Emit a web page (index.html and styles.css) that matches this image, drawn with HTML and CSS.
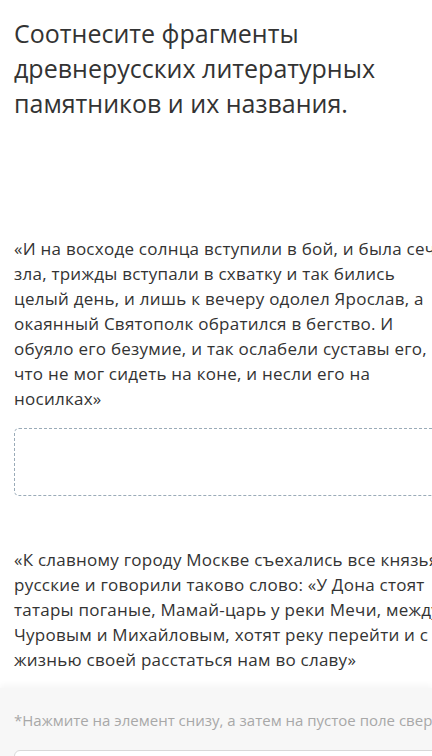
FILE: index.html
```html
<!DOCTYPE html>
<html lang="ru">
<head>
<meta charset="utf-8">
<link rel="stylesheet" href="styles.css">
</head>
<body>
<div class="page">
  <h1 class="title">Соотнесите фрагменты<br>древнерусских литературных<br>памятников и их названия.</h1>
  <p class="fragment first">«И на восходе солнца вступили в бой, и была сеча<br>зла, трижды вступали в схватку и так бились<br>целый день, и лишь к вечеру одолел Ярослав, а<br>окаянный Святополк обратился в бегство. И<br>обуяло его безумие, и так ослабели суставы его,<br>что не мог сидеть на коне, и несли его на<br>носилках»</p>
  <div class="drop"></div>
  <p class="fragment second">«К славному городу Москве съехались все князья<br>русские и говорили таково слово: «У Дона стоят<br>татары поганые, Мамай-царь у реки Мечи, между<br>Чуровым и Михайловым, хотят реку перейти и с<br>жизнью своей расстаться нам во славу»</p>
</div>
<div class="footer">
  <p class="hint">*Нажмите на элемент снизу, а затем на пустое поле сверху</p>
  <div class="option"></div>
</div>
</body>
</html>
```
FILE: styles.css
```css
html, body {
  margin: 0;
  padding: 0;
  background: #ffffff;
  overflow: hidden;
  width: 432px;
  height: 756px;
}
body {
  font-family: "Open Sans", "Liberation Sans", sans-serif;
  color: #333333;
  position: relative;
}
.page {
  padding: 16px 0 0 14px;
  white-space: nowrap;
}
.title {
  margin: 0;
  font-size: 25px;
  font-weight: 400;
  line-height: 35px;
  color: #333;
}
.fragment {
  margin: 0;
  font-size: 17px;
  line-height: 25px;
  letter-spacing: 0.25px;
  color: #333;
}
.first {
  margin-top: 115px;
}
.drop {
  margin-top: 17px;
  height: 66px;
  width: 460px;
  border: 1px dashed #9aabb8;
  border-radius: 5px;
}
.second {
  margin-top: 51px;
}
.footer {
  position: absolute;
  left: 0;
  right: 0;
  top: 688px;
  bottom: 0;
  background: #f7f7f7;
  box-shadow: 0 -3px 6px rgba(0,0,0,0.04);
  padding: 0 0 0 14px;
  white-space: nowrap;
}
.hint {
  margin: 22px 0 0 0;
  font-size: 15px;
  line-height: 20px;
  color: #a8a8a8;
}
.option {
  margin-top: 20px;
  height: 40px;
  width: 460px;
  border: 1px solid #d8d8d8;
  border-radius: 6px;
  background: #fff;
}
```
